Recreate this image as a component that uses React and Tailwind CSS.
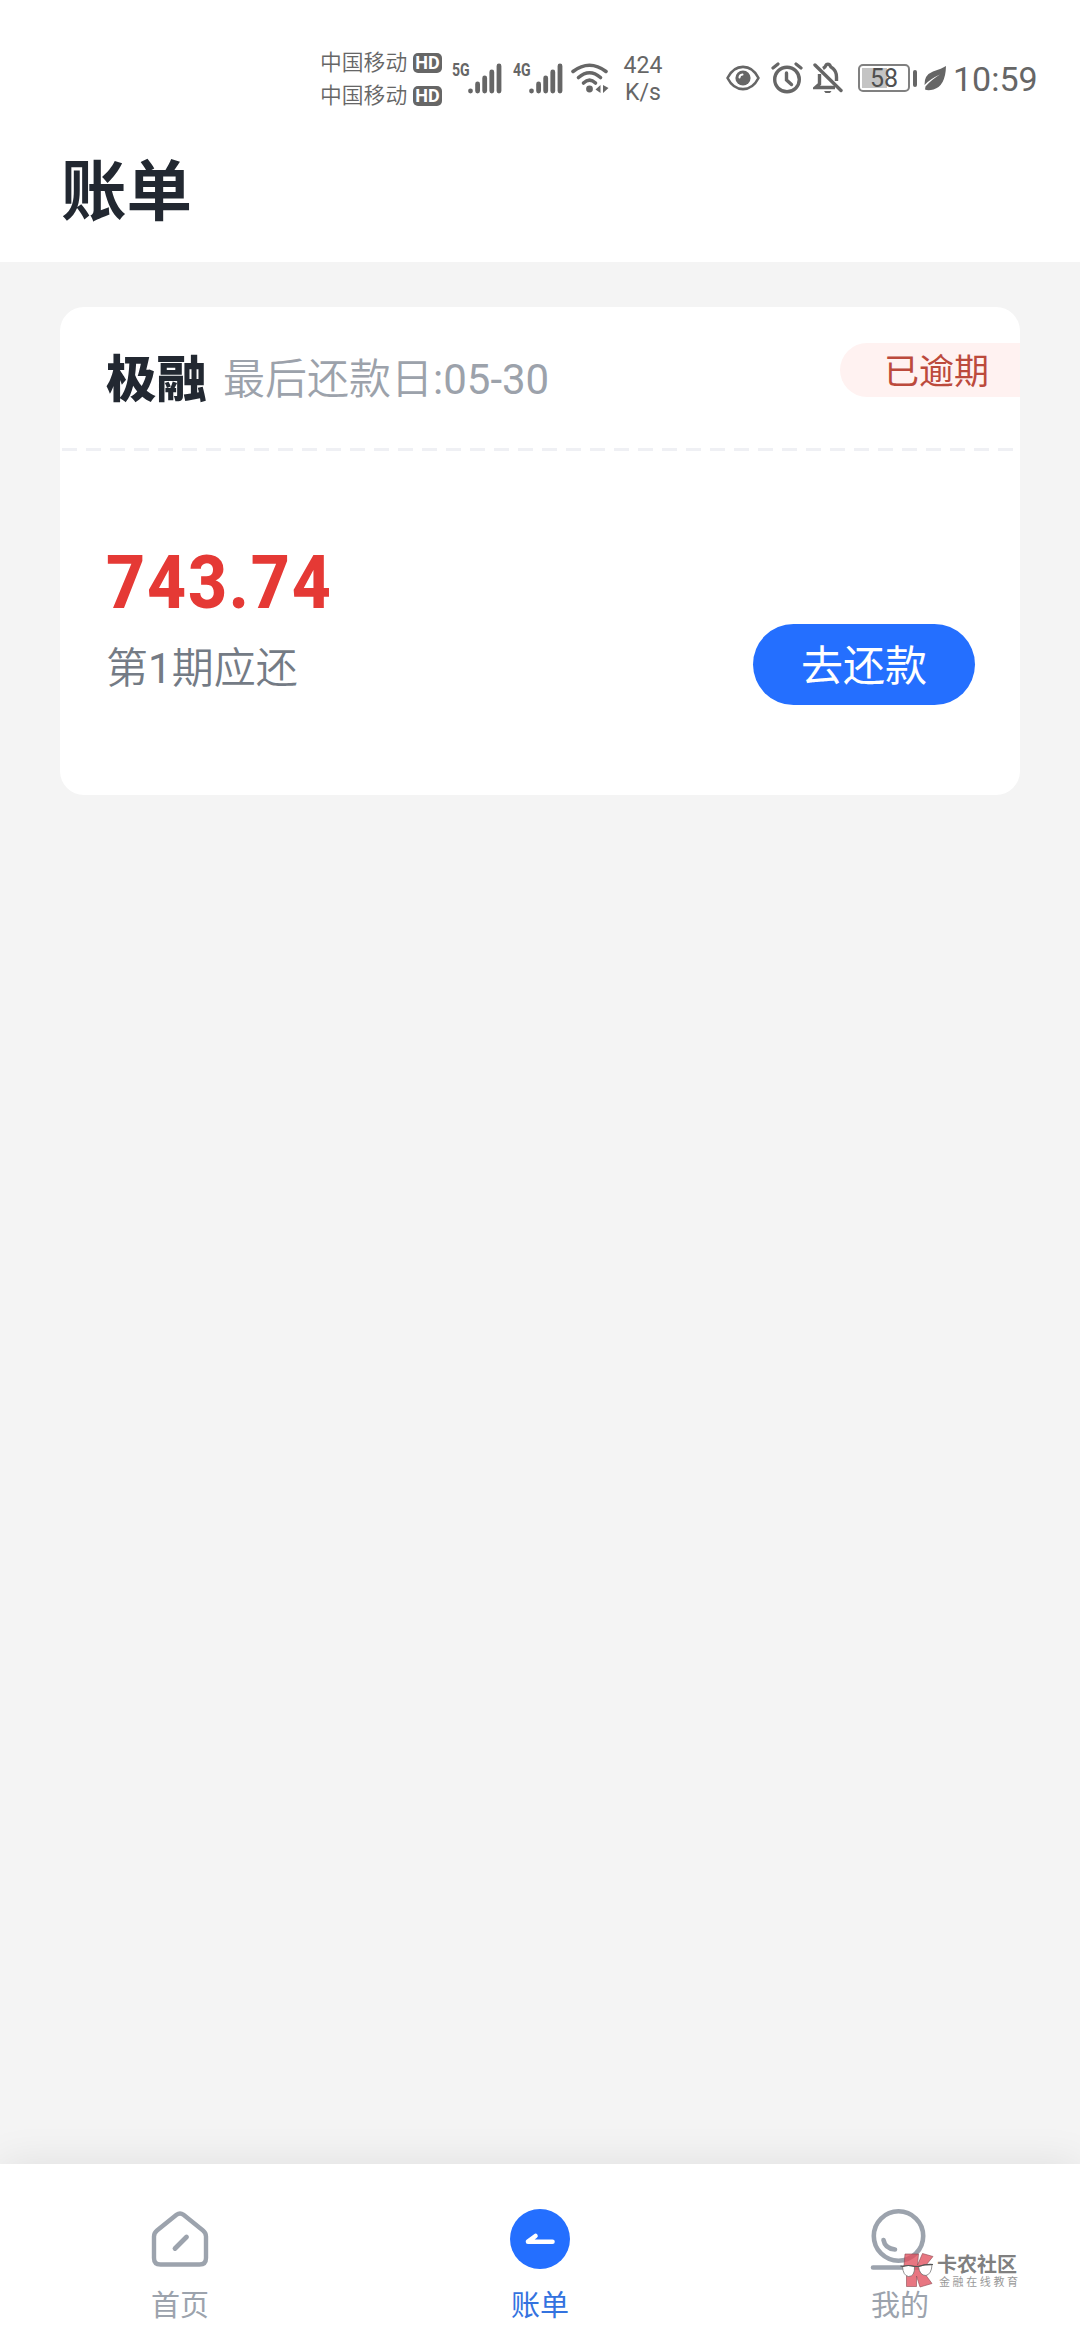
import clsx from "clsx";

function Carrier() {
  return (
    <div className="flex h-[33px] items-center gap-[6px]">
      <span className="w-[87px] whitespace-nowrap text-[21.8px] leading-[33px] font-[350]">中国移动</span>
      <span className="flex h-[20px] w-[29px] items-center justify-center rounded-[5px] bg-[#666666] font-['Roboto',sans-serif] text-[18px] leading-none font-bold text-white">
        HD
      </span>
    </div>
  );
}

function Signal({ label }) {
  return (
    <div className="flex h-[31px] w-[51px] items-start">
      <span className="w-[16px] origin-left scale-x-[0.74] whitespace-nowrap font-['Roboto',sans-serif] text-[19px] leading-[14px] font-bold">
        {label}
      </span>
      <svg className="h-[31px] w-[34px] shrink-0" viewBox="0 0 34 31" stroke="#666666" strokeWidth="4.8" strokeLinecap="round">
        <path d="M2.5 28V28.1M9.6 28V21M16.7 28V15M23.8 28V9M31 28V3" />
      </svg>
    </div>
  );
}

function WifiIcon() {
  return (
    <svg className="h-[30px] w-[38px]" viewBox="0 0 38 30" fill="none" stroke="#666666" strokeLinecap="round">
      <path d="M2 8.5Q18.5 -4 35 8.5" strokeWidth="3.6" />
      <path d="M7.5 14.5Q18.5 5 29.5 14.5" strokeWidth="3.6" />
      <path d="M12.5 20Q18.5 14.2 24.5 20" strokeWidth="3.6" />
      <circle cx="18.5" cy="26" r="3.4" fill="#666666" stroke="none" />
      <path d="M29.5 22V30L24.5 26.5ZM32 22V30L37.5 25Z" fill="#666666" stroke="none" />
    </svg>
  );
}

function EyeIcon() {
  return (
    <svg className="h-[26px] w-[34px]" viewBox="0 0 34 26" fill="none">
      <path d="M1.5 13C9 -1.8 25 -1.8 32.5 13C25 27.8 9 27.8 1.5 13Z" stroke="#666666" strokeWidth="2.6" strokeLinejoin="round" />
      <circle cx="17" cy="13" r="7.6" fill="#666666" />
      <path d="M13.5 12.5Q13.500 9.800 16.500 9.500" stroke="white" strokeWidth="2" strokeLinecap="round" />
    </svg>
  );
}

function AlarmIcon() {
  return (
    <svg className="h-[32px] w-[32px]" viewBox="0 0 32 32" fill="none" stroke="#666666" strokeLinecap="round">
      <circle cx="16" cy="17.5" r="12.3" strokeWidth="3.4" />
      <path d="M2 6L7 2M30 6L25 2" strokeWidth="3.2" />
      <path d="M15.5 11V18L20.5 22.5" strokeWidth="3.4" />
    </svg>
  );
}

function BellOffIcon() {
  return (
    <svg className="h-[32px] w-[30px]" viewBox="0 0 30 32" fill="none" stroke="#666666" strokeWidth="3.4">
      <path d="M2 3L28 28.5" strokeLinecap="round" />
      <path d="M6.5 12V22L2.5 25.5H22" />
      <path d="M10 6.5Q12.5 5 12.8 3.5A2.3 2.3 0 0 1 17 3.5Q17.3 5 20 6.5Q23.5 9.5 23.5 15V19" />
      <path d="M11 29H18.5L17 31H12.5Z" fill="#666666" stroke="none" />
    </svg>
  );
}

function Battery() {
  return (
    <div className="flex items-center gap-[3px]">
      <div className="flex h-[28px] w-[52px] items-center rounded-[5px] border-2 border-[#808080] p-[2px]">
        <div className="flex h-[20px] w-[46px] items-center justify-center bg-[linear-gradient(to_right,#c4c4c4_57%,transparent_57%)] font-['Roboto',sans-serif] text-[25px] leading-none text-[#505050]">
          58
        </div>
      </div>
      <div className="h-[17px] w-[4px] rounded-full bg-[#666666]" />
    </div>
  );
}

function LeafIcon() {
  return (
    <svg className="h-[26px] w-[24px]" viewBox="0 0 24 26" fill="#666666">
      <path d="M23 1Q19 3.5 10 6.5Q1 10 1.5 20Q7 14 17 9.5Q8 15 2.5 21.5L2 24.5Q5 26 10.5 24.5Q22.5 21 23 1Z" />
    </svg>
  );
}

function StatusBar() {
  return (
    <div className="flex h-[156px] items-center pl-[320px] text-[#666666]">
      <div className="mt-[2px] w-[122px]">
        <Carrier />
        <Carrier />
      </div>
      <div className="ml-[10px] flex items-center gap-[10px]">
        <Signal label="5G" />
        <Signal label="4G" />
      </div>
      <div className="ml-[7px]">
        <WifiIcon />
      </div>
      <div className="ml-[10px] mt-[2px] w-[48px] text-center font-['Roboto',sans-serif] text-[23px] leading-[27px]">
        <p>424</p>
        <p>K/s</p>
      </div>
      <div className="ml-[59px] flex items-center">
        <EyeIcon />
        <div className="ml-[11px]"><AlarmIcon /></div>
        <div className="ml-[10px]"><BellOffIcon /></div>
        <div className="ml-[15px]"><Battery /></div>
        <div className="ml-[6px]"><LeafIcon /></div>
        <span className="ml-[6px] mt-[2px] font-['Roboto',sans-serif] text-[34px] leading-none">10:59</span>
      </div>
    </div>
  );
}

function BillCard() {
  return (
    <section className="mx-[60px] mt-[45px] h-[488px] overflow-hidden rounded-[24px] bg-white">
      <div className="flex h-[141px] items-start justify-between">
        <div className="flex items-center pt-[37px] pl-[46px]">
          <h2 className="text-[50.5px] leading-[72px] font-black text-[#222831]">极融</h2>
          <p className="ml-[16px] whitespace-nowrap text-[42px] leading-[72px] font-[350] text-[#9ca2ab]">
            最后还款日<span className="font-normal">:05-30</span>
          </p>
        </div>
        <span className="mt-[36px] flex h-[54px] w-[180px] items-center rounded-l-full bg-[#fff2f1] pt-[4px] pl-[44px] text-[35px] leading-none text-[#bc4a3c]">
          已逾期
        </span>
      </div>
      <div className="ml-[2px] h-[3px] w-[951px] bg-[repeating-linear-gradient(to_right,#eff0f4_0_15px,transparent_15px_24px)]" />
      <div className="flex items-start justify-between pr-[45px] pl-[46px]">
        <div className="pt-[94px]">
          <p className="origin-left scale-x-[0.905] font-['Roboto',sans-serif] text-[75px] leading-[75px] font-extrabold tracking-[2px] text-[#e53935]">
            743.74
          </p>
          <p className="mt-[19px] text-[42px] leading-[60px] font-[350] text-[#747b85]">
            第<span className="font-normal">1</span>期应还
          </p>
        </div>
        <button className="mt-[173px] h-[81px] w-[222px] rounded-full bg-[#246fff] pt-[5px] text-[42px] leading-none text-white">
          去还款
        </button>
      </div>
    </section>
  );
}

function HomeIcon() {
  return (
    <svg className="h-[60px] w-[60px]" viewBox="0 0 60 60" fill="none" stroke="#9ca3ad" strokeWidth="4.4" strokeLinecap="round" strokeLinejoin="round">
      <path d="M26.5 5.8Q30 3 33.5 5.8L53 21.5Q56 24 56 27.5V49Q56 55.5 49.5 55.5H10.5Q4 55.5 4 49V27.5Q4 24 7 21.5Z" />
      <path d="M25 39.5L36.5 28" strokeWidth="4.8" />
    </svg>
  );
}

function BillIcon() {
  return (
    <svg className="h-[60px] w-[60px]" viewBox="0 0 60 60" fill="none">
      <circle cx="30" cy="30" r="30" fill="#246fff" />
      <path d="M42.5 32.7H18L25.5 27" stroke="white" strokeWidth="4.6" strokeLinecap="round" strokeLinejoin="round" />
    </svg>
  );
}

function MineIcon() {
  return (
    <svg className="h-[62px] w-[60px]" viewBox="0 0 60 62" fill="none" stroke="#9ca3ad" strokeWidth="4.6" strokeLinecap="round">
      <circle cx="28.5" cy="27" r="24.7" />
      <path d="M13.5 31Q15 39.5 25 40.5M3 58.5H57" />
    </svg>
  );
}

const tabs = [
  { label: "首页", Icon: HomeIcon },
  { label: "账单", Icon: BillIcon, active: true },
  { label: "我的", Icon: MineIcon },
];

function TabBar() {
  return (
    <nav className="grid h-[176px] grid-cols-3 bg-white shadow-[0_0_40px_rgba(0,0,0,0.09)]">
      {tabs.map(({ label, Icon, active }) => (
        <div key={label} className="flex flex-col items-center pt-[45px]">
          <div className="h-[62px]">
            <Icon />
          </div>
          <span className={clsx("mt-[15px] text-[29px] leading-[40px]", active ? "text-[#3473df]" : "text-[#9ca3ad]")}>
            {label}
          </span>
        </div>
      ))}
    </nav>
  );
}

// Community stamp lying over the last tab
function Stamp() {
  return (
    <div className="absolute top-[2252px] left-[900px] flex">
      <svg className="h-[37px] w-[35px]" viewBox="0 0 35 37" fill="none">
        <path d="M5 2H18.5L17.500 13L22.500 1.500L33 4.500L22 18L32 31.500L20 35L16.500 24V34.500H6.500V22L4 14Z" fill="#e14f5d" fillOpacity="0.78" stroke="#8c4a52" strokeWidth="0.6" />
        <path d="M2.500 14.500Q8 12.500 14.500 14.500Q15 24.500 8.500 24.500Q3 23.500 2.500 14.500ZM18.500 14.500Q25 12 32 13Q31.500 22 26 23.500Q19.500 23.500 18.500 14.500Z" fill="white" stroke="#666666" strokeWidth="0.7" />
        <path d="M0.500 14L3 14.500Q8 12.500 14.500 14.500H18.500Q25 12 33 12.500" stroke="#555555" strokeWidth="1.2" />
      </svg>
      <div className="ml-[2px] whitespace-nowrap">
        <p className="mt-[3px] text-[20px] leading-[20px] font-bold text-[#808080]">卡农社区</p>
        <p className="mt-[1px] ml-[2px] text-[11px] leading-[14px] tracking-[2.6px] text-[#999999]">金融在线教育</p>
      </div>
    </div>
  );
}

export default function App() {
  return (
    <div className="relative flex h-[2340px] w-[1080px] flex-col overflow-hidden bg-[#f4f4f4] font-['Roboto','Noto_Sans_CJK_SC',sans-serif]">
      <header className="h-[262px] bg-white">
        <StatusBar />
        <h1 className="-mt-[11px] pl-[61px] text-[65.5px] leading-[96px] font-bold text-[#222831]">账单</h1>
      </header>
      <main className="flex-1">
        <BillCard />
      </main>
      <TabBar />
      <Stamp />
    </div>
  );
}
